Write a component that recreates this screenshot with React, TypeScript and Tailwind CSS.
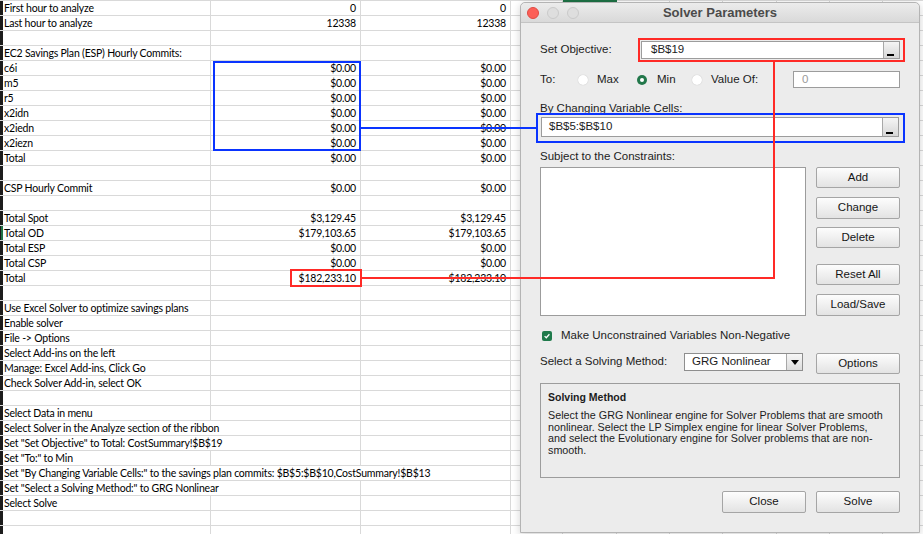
import React from "react";

type Row = { a?: string; b?: string; c?: string; span?: 1 | 2 | 3 };

const ROWS: Row[] = [
  { a: "First hour to analyze", b: "0", c: "0" },
  { a: "Last hour to analyze", b: "12338", c: "12338" },
  {},
  { a: "EC2 Savings Plan (ESP) Hourly Commits:" },
  { a: "c6i", b: "$0.00", c: "$0.00" },
  { a: "m5", b: "$0.00", c: "$0.00" },
  { a: "r5", b: "$0.00", c: "$0.00" },
  { a: "x2idn", b: "$0.00", c: "$0.00" },
  { a: "x2iedn", b: "$0.00", c: "$0.00" },
  { a: "x2iezn", b: "$0.00", c: "$0.00" },
  { a: "Total", b: "$0.00", c: "$0.00" },
  {},
  { a: "CSP Hourly Commit", b: "$0.00", c: "$0.00" },
  {},
  { a: "Total Spot", b: "$3,129.45", c: "$3,129.45" },
  { a: "Total OD", b: "$179,103.65", c: "$179,103.65" },
  { a: "Total ESP", b: "$0.00", c: "$0.00" },
  { a: "Total CSP", b: "$0.00", c: "$0.00" },
  { a: "Total", b: "$182,233.10", c: "$182,233.10" },
  {},
  { a: "Use Excel Solver to optimize savings plans" },
  { a: "Enable solver" },
  { a: "File -> Options" },
  { a: "Select Add-ins on the left" },
  { a: "Manage: Excel Add-ins, Click Go" },
  { a: "Check Solver Add-in, select OK" },
  {},
  { a: "Select Data in menu" },
  { a: "Select Solver in the Analyze section of the ribbon", span: 2 },
  { a: 'Set "Set Objective" to Total: CostSummary!$B$19', span: 2 },
  { a: 'Set "To:" to Min' },
  {
    a: 'Set "By Changing Variable Cells:" to the savings plan commits: $B$5:$B$10,CostSummary!$B$13',
    span: 3,
  },
  { a: 'Set "Select a Solving Method:" to GRG Nonlinear', span: 2 },
  { a: "Select Solve" },
  {},
  {},
];

const SPAN_W = { 1: "w-[208px]", 2: "w-[358px]", 3: "w-[508px]" };
const EXTRA_COLS = ["w-[52px]", "w-[54px]", "w-[53px]", "w-[53px]", "w-[54px]", "w-[53px]", "w-[53px]", "w-[53px]"];

function SheetRow({ row, index }: { row: Row; index: number }) {
  const span = row.span ?? 1;
  return (
    <div className="flex h-[15px] shrink-0 border-b border-[#d9d9d9]">
      <div className={`w-[3px] shrink-0 bg-[#1c1c1c] ${index === 15 ? "border-r-2 border-[#217346]" : ""}`} />
      <div className={`${SPAN_W[span]} shrink-0 border-r border-[#d9d9d9] pl-[1px] leading-[14px] whitespace-nowrap`}>
        {row.a}
      </div>
      {span < 2 && (
        <div className="w-[150px] shrink-0 border-r border-[#d9d9d9] pr-[4px] text-right leading-[14px]">{row.b}</div>
      )}
      {span < 3 && (
        <div className="w-[150px] shrink-0 border-r border-[#d9d9d9] pr-[4px] text-right leading-[14px]">{row.c}</div>
      )}
      {EXTRA_COLS.map((w, i) => (
        <div key={i} className={`${w} shrink-0 border-r border-[#d9d9d9]`} />
      ))}
    </div>
  );
}

function MacButton({ label, className = "" }: { label: string; className?: string }) {
  return (
    <button
      className={`w-[84px] flex items-center justify-center rounded-[2px] border border-[#a5a5a5] bg-linear-to-b from-[#fdfdfd] to-[#e3e3e3] text-[11.5px] text-[#151515] ${className}`}
    >
      {label}
    </button>
  );
}

function RefButton() {
  return (
    <div className="relative w-[16px] h-full shrink-0 border-l border-[#a8a8a8] bg-linear-to-b from-[#f5f5f5] to-[#d6d6d6]">
      <span className="absolute left-[3px] bottom-[2px] w-[7px] h-[2px] bg-black" />
    </div>
  );
}

function Radio({ checked = false }: { checked?: boolean }) {
  return checked ? (
    <span className="w-[10px] h-[10px] shrink-0 rounded-full bg-[#22774a] flex items-center justify-center">
      <span className="w-[4px] h-[4px] rounded-full bg-white" />
    </span>
  ) : (
    <span className="w-[10px] h-[10px] shrink-0 rounded-full bg-white shadow-[0_0_1px_rgba(0,0,0,0.25)]" />
  );
}

function SolverDialog() {
  return (
    <div className="absolute left-[520px] top-[2px] w-[400px] h-[531px] flex flex-col bg-[#ececec] border border-[#b4b4b4] rounded-t-[5px] shadow-[0_2px_8px_rgba(0,0,0,0.18)] font-['Liberation_Sans',sans-serif] text-[11.5px] text-[#1c1c1c]">
      {/* Title bar */}
      <div className="h-[20px] shrink-0 grid grid-cols-[1fr_auto_1fr] items-center rounded-t-[5px] border-b border-[#c4c4c4] bg-linear-to-b from-[#ececec] to-[#d9d9d9]">
        <div className="flex items-center gap-[8px] pl-[6px]">
          <span className="w-[12px] h-[12px] rounded-full bg-[#fc5f57] border border-[#df4a43]" />
          <span className="w-[12px] h-[12px] rounded-full bg-[#dedede] border border-[#cacaca]" />
          <span className="w-[12px] h-[12px] rounded-full bg-[#dedede] border border-[#cacaca]" />
        </div>
        <p className="text-[13px] font-bold text-[#4b4b4b]">Solver Parameters</p>
        <div />
      </div>

      <div className="flex flex-col px-[19px] pt-[18px]">
        {/* Set Objective */}
        <div className="flex items-center h-[18px]">
          <span className="w-[101px] shrink-0">Set Objective:</span>
          <div className="flex-1 h-[18px] flex items-center bg-white border border-[#9c9c9c]">
            <span className="flex-1 pl-[9px]">$B$19</span>
            <RefButton />
          </div>
        </div>

        {/* To */}
        <div className="mt-[12px] h-[17px] flex items-center">
          <span className="w-[38px] shrink-0">To:</span>
          <Radio />
          <span className="ml-[9px] w-[40px] shrink-0">Max</span>
          <Radio checked />
          <span className="ml-[10px] w-[35px] shrink-0">Min</span>
          <Radio />
          <span className="ml-[9px]">Value Of:</span>
          <div className="ml-auto w-[107px] h-[17px] flex items-center bg-white border border-[#9c9c9c] pl-[8px] text-[#9a9a9a]">
            0
          </div>
        </div>

        {/* Changing cells */}
        <p className="mt-[13px] h-[14px] leading-[14px]">By Changing Variable Cells:</p>
        <div className="mt-[2px] mx-[1px] h-[20px] flex items-center bg-white border border-[#9c9c9c]">
          <span className="flex-1 pl-[7px]">$B$5:$B$10</span>
          <RefButton />
        </div>

        {/* Constraints */}
        <p className="mt-[12px] h-[14px] leading-[14px]">Subject to the Constraints:</p>
        <div className="mt-[4px] flex">
          <div className="w-[266px] h-[149px] bg-white border border-[#9c9c9c]" />
          <div className="ml-[10px] flex flex-col">
            <MacButton label="Add" className="h-[21px]" />
            <MacButton label="Change" className="mt-[9px] h-[22px]" />
            <MacButton label="Delete" className="mt-[8px] h-[21px]" />
            <MacButton label="Reset All" className="mt-[16px] h-[21px]" />
            <MacButton label="Load/Save" className="mt-[9px] h-[22px]" />
          </div>
        </div>

        {/* Non-negative */}
        <div className="mt-[13px] h-[14px] flex items-center">
          <span className="ml-[2px] w-[10px] h-[10px] rounded-[2px] bg-[#1f7a4b] flex items-center justify-center">
            <svg viewBox="0 0 10 10" className="w-[8px] h-[8px]">
              <path d="M2 5.2 L4.1 7.2 L8 2.8" fill="none" stroke="white" strokeWidth="1.6" />
            </svg>
          </span>
          <span className="ml-[9px]">Make Unconstrained Variables Non-Negative</span>
        </div>

        {/* Solving method */}
        <div className="mt-[10px] flex items-start">
          <span className="w-[144px] h-[18px] shrink-0 flex items-center">Select a Solving Method:</span>
          <div className="w-[119px] h-[18px] flex items-center bg-white border border-[#8e8e8e]">
            <span className="flex-1 pl-[7px]">GRG Nonlinear</span>
            <div className="w-[16px] h-full flex items-center justify-center border-l border-[#a8a8a8] bg-linear-to-b from-[#f7f7f7] to-[#dcdcdc]">
              <svg viewBox="0 0 8 5" className="w-[8px] h-[5px]">
                <path d="M0 0 H8 L4 5 Z" fill="black" />
              </svg>
            </div>
          </div>
          <MacButton label="Options" className="ml-[13px] h-[21px]" />
        </div>

        {/* Description */}
        <div className="mt-[9px] h-[95px] border border-[#9c9c9c] pl-[7px] pt-[7px]">
          <p className="h-[13px] leading-[13px] text-[10.5px] font-bold">Solving Method</p>
          <div className="mt-[6px] text-[10.75px] leading-[11.7px] whitespace-nowrap">
            <p>Select the GRG Nonlinear engine for Solver Problems that are smooth</p>
            <p>nonlinear. Select the LP Simplex engine for linear Solver Problems,</p>
            <p>and select the Evolutionary engine for Solver problems that are non-</p>
            <p>smooth.</p>
          </div>
        </div>

        {/* Footer */}
        <div className="mt-[13px] flex justify-end gap-[10px]">
          <MacButton label="Close" className="h-[22px]" />
          <MacButton label="Solve" className="h-[22px]" />
        </div>
      </div>
    </div>
  );
}

export default function App() {
  return (
    <div className="relative w-[923px] h-[534px] overflow-hidden bg-white">
      {/* Spreadsheet */}
      <div className="flex flex-col border-t border-[#d9d9d9] font-['Lato',sans-serif] text-[10.5px] tracking-[-0.2px] text-black">
        {ROWS.map((row, i) => (
          <SheetRow key={i} row={row} index={i} />
        ))}
      </div>

      {/* selected column marker above dialog */}
      <div className="absolute left-[563px] top-0 w-[54px] h-[2px] bg-[#1e7145]" />

      <SolverDialog />

      {/* Annotations */}
      <div className="absolute left-[213px] top-[61px] w-[148px] h-[90px] border-2 border-[#0a34ff]" />
      <div className="absolute left-[361px] top-[127px] w-[175px] h-[2px] bg-[#0a34ff]" />
      <div className="absolute left-[536px] top-[113px] w-[369px] h-[30px] border-2 border-[#0a34ff]" />

      <div className="absolute left-[290px] top-[269px] w-[72px] h-[18px] border-2 border-[#ff2a26]" />
      <div className="absolute left-[362px] top-[277px] w-[413px] h-[2px] bg-[#ff2a26]" />
      <div className="absolute left-[773px] top-[62px] w-[2px] h-[217px] bg-[#ff2a26]" />
      <div className="absolute left-[638px] top-[38px] w-[267px] h-[24px] border-2 border-[#ff2a26]" />
    </div>
  );
}
